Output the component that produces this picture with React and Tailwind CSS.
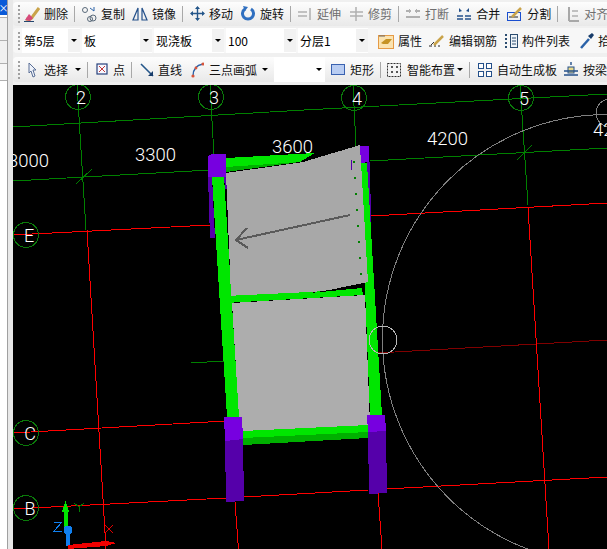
import React from 'react';

const cad = { fontFamily: 'Roboto, "Liberation Sans", sans-serif', fontWeight: 300 };

function Grip() {
  return (
    <div className="flex flex-col gap-[2px] w-[2px] mr-[5px] shrink-0">
      <span className="w-[2px] h-[2px] bg-[#a0a0a0]" />
      <span className="w-[2px] h-[2px] bg-[#a0a0a0]" />
      <span className="w-[2px] h-[2px] bg-[#a0a0a0]" />
      <span className="w-[2px] h-[2px] bg-[#a0a0a0]" />
      <span className="w-[2px] h-[2px] bg-[#a0a0a0]" />
    </div>
  );
}

function Sep() {
  return <span className="w-px h-[16px] bg-[#a8a8a8] shrink-0" />;
}

function Caret({ className = '' }) {
  return <span className={`w-0 h-0 border-x-[3px] border-x-transparent border-t-[3px] border-t-black shrink-0 ${className}`} />;
}

function Icon({ children, w = 16 }) {
  return (
    <svg width={w} height="16" viewBox={`0 0 ${w} 16`} className="shrink-0" fill="none">
      {children}
    </svg>
  );
}

function Tool({ icon, label, gray, caret, caretClass, className = '' }) {
  return (
    <div className={`flex items-center gap-[4px] shrink-0 whitespace-nowrap ${className}`}>
      {icon}
      <span className={gray ? 'text-[#6e6e6e]' : 'text-[#111]'}>{label}</span>
      {caret && <Caret className={caretClass} />}
    </div>
  );
}

function Select({ label, width }) {
  return (
    <div className={`${width} h-[25px] bg-white flex items-center pl-[2px] shrink-0`}>
      <span className="flex-1 whitespace-nowrap">{label}</span>
      <span className="w-[12px] h-[23px] bg-[#f2f2f2] flex items-center justify-center">
        <Caret />
      </span>
    </div>
  );
}

const eraser = (
  <Icon>
    <path d="M2 13c3 1 6 0 7-3l6-8" stroke="#c9a34a" strokeWidth="3" />
    <path d="M1 14l4-6 4 4-3 3z" fill="#d64a7a" />
    <path d="M0 15.500h10" stroke="#23466e" />
  </Icon>
);
const copyIcon = (
  <Icon>
    <circle cx="4" cy="4" r="2.5" stroke="#5a6a7a" />
    <circle cx="12" cy="12" r="3" stroke="#5a6a7a" />
    <circle cx="9" cy="13" r="2.5" stroke="#5a6a7a" />
    <path d="M9 2l4 3V1" stroke="#2a62a8" />
  </Icon>
);
const mirror = (
  <Icon>
    <path d="M6 2L1 14h5z" stroke="#24508a" strokeWidth="1.2" />
    <path d="M10 2l5 12h-5z" stroke="#24508a" strokeWidth="1.2" />
  </Icon>
);
const move = (
  <Icon w={15}>
    <path d="M7.500 1v13M1 7.500h13" stroke="#24568a" strokeWidth="1.4" />
    <path d="M5 3l2.500-3L10 3zM5 12l2.500 3 2.500-3zM3 5L0 7.500 3 10zM12 5l3 2.500L12 10z" fill="#24568a" />
  </Icon>
);
const rotate = (
  <Icon w={15}>
    <path d="M4 3a5.500 5.500 0 1 0 6 0" stroke="#2f6fc0" strokeWidth="3" />
    <path d="M2 0l5 1-3 4z" fill="#2f6fc0" />
  </Icon>
);
const extend = (
  <Icon>
    <path d="M1 6h9M1 10h9M13 2v12" stroke="#b0b0b0" strokeWidth="1.5" />
  </Icon>
);
const trim = (
  <Icon w={14}>
    <path d="M0 6h13M0 10h13M6 1v14" stroke="#b0b0b0" strokeWidth="1.5" />
  </Icon>
);
const breakIcon = (
  <Icon>
    <path d="M1 5h5M10 5h5M1 11h14" stroke="#b0b0b0" strokeWidth="2" />
    <path d="M4 3l2 2-2 2M12 3l-2 2 2 2" stroke="#b0b0b0" />
  </Icon>
);
const merge = (
  <Icon>
    <path d="M1 10h14M1 13h14" stroke="#24508a" strokeWidth="1.6" strokeDasharray="6 2" />
    <path d="M3 2l3 3-3 1zM13 2l-3 3 3 1z" fill="#24508a" />
  </Icon>
);
const split = (
  <Icon>
    <rect x="0.5" y="6.500" width="13" height="8" stroke="#1a4fd0" />
    <path d="M2 11h9" stroke="#222" />
    <path d="M5 11l9-9" stroke="#c9a34a" strokeWidth="2.5" />
  </Icon>
);
const align = (
  <Icon w={12}>
    <path d="M1 1v14M1 15h10" stroke="#a8a8a8" strokeWidth="2" />
    <path d="M4 5h6M4 10h6" stroke="#c0c0c0" strokeWidth="2" />
  </Icon>
);
const props = (
  <Icon>
    <rect x="0.5" y="2.500" width="15" height="13" fill="#fbe3b0" stroke="#e59a45" />
    <path d="M3 10l5-4h6l-4 5H5z" fill="#c69324" />
    <path d="M1 3h6" stroke="#666" />
  </Icon>
);
const rebar = (
  <Icon>
    <path d="M0 13h3M5 13h2M9 13h2" stroke="#222" />
    <path d="M5 12L14 3" stroke="#c9a34a" strokeWidth="2.5" />
    <path d="M2 12l3-3" stroke="#333" />
  </Icon>
);
const list = (
  <Icon w={14}>
    <path d="M1 2h2M1 6h2M1 10h2M1 14h2" stroke="#2b4c70" strokeWidth="2" strokeDasharray="2 1" />
    <rect x="6.500" y="1.500" width="7" height="13" fill="#eef3f8" stroke="#2b4c70" />
    <path d="M8 5h4M8 8h4M8 11h4" stroke="#2b4c70" />
  </Icon>
);
const picker = (
  <Icon w={14}>
    <path d="M1 15l8-9" stroke="#2a62a8" strokeWidth="2.5" />
    <path d="M8 3l3 3 3-4-2-2z" fill="#173c6a" />
  </Icon>
);
const cursor = (
  <Icon w={9}>
    <path d="M1 1l7 7H5l2 6-2 1-2-6-2 2z" fill="#eef2fa" stroke="#5a6f96" />
  </Icon>
);
const pointIcon = (
  <Icon w={12}>
    <rect x="1" y="2" width="10" height="10" fill="#f8f8ff" stroke="#28427c" strokeWidth="1.2" />
    <path d="M3 4l6 6M9 4l-6 6" stroke="#c23a3a" />
  </Icon>
);
const lineIcon = (
  <Icon w={14}>
    <path d="M1 2l12 12" stroke="#24568a" strokeWidth="1.6" />
    <path d="M13 9v5H8z" fill="#173c6a" />
  </Icon>
);
const arc = (
  <Icon w={13}>
    <path d="M2 14C2 7 6 3 12 2" stroke="#2a62a8" strokeWidth="1.4" />
    <circle cx="2" cy="14" r="1.6" fill="#d8543a" />
    <circle cx="12" cy="2" r="1.6" fill="#d8543a" />
    <circle cx="5" cy="6" r="1.4" fill="#d8543a" />
  </Icon>
);
const rectIcon = (
  <Icon w={14}>
    <rect x="0.5" y="2.500" width="13" height="10" fill="#b9cdf2" stroke="#3a62b0" />
  </Icon>
);
const smart = (
  <Icon w={14}>
    <rect x="0.5" y="1.500" width="13" height="13" fill="#f4f4f4" stroke="#333" strokeDasharray="2 1" />
    <path d="M4 5h2M5 4v2M9 5h2M10 4v2M4 10h2M5 9v2M9 10h2M10 9v2" stroke="#222" />
  </Icon>
);
const autoSlab = (
  <Icon w={14}>
    <rect x="0.5" y="1.500" width="5" height="5" fill="#fff" stroke="#24508a" />
    <rect x="8.500" y="1.500" width="5" height="5" fill="#fff" stroke="#24508a" />
    <rect x="0.5" y="9.500" width="5" height="5" fill="#fff" stroke="#24508a" />
    <rect x="8.500" y="9.500" width="5" height="5" fill="#fff" stroke="#24508a" />
  </Icon>
);
const byBeam = (
  <Icon w={14}>
    <rect x="4" y="5" width="6" height="6" fill="#e9d98a" stroke="#24508a" />
    <path d="M0 9h14M0 13h14M7 0v3" stroke="#24508a" strokeWidth="1.4" />
  </Icon>
);

// grid + building are one drawing, coordinates are page pixels
function Axis({ cx, cy, label, lx }) {
  return (
    <g>
      <circle cx={cx} cy={cy} r="12.5" fill="none" stroke="#0a7a0a" />
      <text x={lx ?? cx + 3} y={cy + 7} textAnchor="middle" fontSize="18" fill="#fff" style={cad}>{label}</text>
    </g>
  );
}

function Dim({ x, y, children }) {
  return <text x={x} y={y} fontSize="18.500" fill="#fff" style={cad}>{children}</text>;
}

function Drawing() {
  const green = '#008000';
  const red = '#ff0000';
  return (
    <svg width="594" height="464" viewBox="13 85 594 464" className="block" shapeRendering="crispEdges">
      {/* grid lines */}
      <g fill="none" strokeWidth="1">
        <path d="M77 85L86 230" stroke={green} />
        <path d="M210 85L214 156" stroke={green} />
        <path d="M353 85L356 146" stroke={green} />
        <path d="M520 85L528 205" stroke={green} />
        <path d="M13 127L304 110L607 94" stroke={green} />
        <path d="M13 181L210 170M370 161L607 148" stroke={green} />
        <path d="M76 184L92 169M517 160L532 145" stroke={green} />
        <path d="M191 363L224 361" stroke={green} />
        <path d="M13 235L210 225M371 216L607 203" stroke={red} />
        <path d="M377 353L607 340" stroke="#800000" />
        <path d="M13 433L226 421" stroke={red} />
        <path d="M13 509L226 498M244 497L368 490M386 489L607 477" stroke={red} />
        <path d="M528 207L549 549" stroke={red} />
        <path d="M378 493L382 549" stroke={red} />
        <path d="M235 502L238.500 549" stroke={red} />
        <path d="M87 230L106 549" stroke={red} />
      </g>

      <Axis cx={78} cy={97} label="2" lx={81} />
      <Axis cx={211} cy={97} label="3" lx={214} />
      <Axis cx={354} cy={98} label="4" lx={357} />
      <Axis cx={521} cy={98} label="5" lx={524} />
      <Axis cx={26} cy={235} label="E" lx={29} />
      <Axis cx={26} cy={433} label="C" lx={30} />
      <Axis cx={26} cy={508} label="B" lx={30} />

      <circle cx="607" cy="339" r="224.5" fill="none" stroke="#808080" />
      <circle cx="610" cy="113" r="14" fill="none" stroke="#808080" />

      <Dim x={8} y={167}>3000</Dim>
      <Dim x={135} y={161}>3300</Dim>
      <Dim x={272} y={153}>3600</Dim>
      <Dim x={427} y={145}>4200</Dim>
      <Dim x={593} y={136}>42</Dim>

      {/* columns behind the walls */}
      <polygon points="208,177 212,177 215,238 210,238" fill="#5500aa" />
      <polygon points="224,177 227,177 227,189 225,189" fill="#5500aa" />
      <polygon points="367,162 370,162 371,225 369,225" fill="#5500aa" />

      {/* walls */}
      <polygon points="360,163 367,163 382,415 370,415" fill="#00e600" />
      <polygon points="212,177 224,177 239,417 227,417 219,290" fill="#00e600" />
      <polygon points="226,158 315,153 300,162 226,167" fill="#00e600" />
      <polygon points="226,167 300,162 226,172" fill="#00b000" />

      {/* slab */}
      <polygon points="226,173 303,162 360,145 368,282 310,294 231,296" fill="#a8a8a8" />
      <polygon points="226,296 310,292 362,288 363,295 226,303" fill="#00e600" />
      <polygon points="310,293 362,285 362,288" fill="#000" />
      <polygon points="232,303 365,295 370,425 243,431 239,417" fill="#adadad" />
      <polygon points="243,431 368,425 368,432 243,438" fill="#00e600" />
      <polygon points="243,438 368,432 368,438 243,445" fill="#00b000" />

      {/* slab direction arrow */}
      <path d="M350 215L236 240M247 228L236 240L248 248" fill="none" stroke="#5a5a5a" strokeWidth="2" />
      <path d="M354 161v2M355 177v2M356 193v2M357 209v2M358 225v2M359 241v2M360 257v2M361 273v2" stroke="#008000" strokeWidth="1.5" />
      <path d="M351.500 160v10" stroke="#5500aa" />

      {/* columns */}
      <polygon points="208,156 212,154 226,154 226,177 208,177" fill="#7700e0" />
      <polygon points="360,146 369,146 369,162 361,163" fill="#7700e0" />
      <polygon points="225,441 243,439 244,501 226,502" fill="#5500aa" />
      <polygon points="224,417 242,417 243,439 225,441" fill="#7700e0" />
      <polygon points="368,432 386,431 387,493 369,494" fill="#5500aa" />
      <polygon points="367,415 385,415 386,431 368,432" fill="#7700e0" />

      {/* snap circle sits over the wall */}
      <circle cx="383" cy="340" r="14" fill="none" stroke="#b8b8b8" />

      {/* UCS marker */}
      <path d="M66 510V530" stroke="#00e600" strokeWidth="4" />
      <polygon points="65.500,501 69,512 62,512" fill="#00e600" />
      <path d="M68 530V546" stroke="#1080f0" strokeWidth="4" />
      <circle cx="68" cy="530" r="4.500" fill="#1080f0" />
      <polygon points="68,545 106,541 117,543 106,546 68,549" fill="#f00000" />
      <path d="M74 503L79 507L84 503M79 507V512" stroke="#008000" fill="none" />
      <path d="M54 522H62L54 531H62" stroke="#1080f0" fill="none" />
      <path d="M105 525L113 533M113 525L105 533" stroke="#e00000" fill="none" />
    </svg>
  );
}

export default function App() {
  return (
    <div className="w-[607px] h-[549px] flex overflow-hidden bg-[#f0f0f0] text-[12px] leading-none" style={{ fontFamily: '"Noto Sans CJK SC", "Liberation Sans", sans-serif' }}>
      {/* dock strip on the left */}
      <div className="w-[13px] h-full flex shrink-0">
        <div className="w-[8px] h-full flex flex-col border-r border-[#a0a0a0] bg-white">
          <div className="h-[15px] bg-[#0a5ad8] text-white text-[10px] flex items-center justify-center">×</div>
          <div className="h-[24px] mt-[2px] bg-[#f0f0f0] border-y border-[#b0b0b0]" />
          <div className="h-[23px] bg-[#f0f0f0] border-b border-[#b0b0b0]" />
          <div className="h-[17px] bg-[#f6f6f6] border-b border-[#b0b0b0]" />
          <div className="flex-1 bg-white" />
        </div>
        <div className="flex-1 bg-[#e8e8e8]" />
      </div>

      <div className="flex-1 flex flex-col min-w-0">
        <div className="h-[85px] flex flex-col overflow-hidden pt-[2px]">
          <div className="h-[24px] flex items-center pl-[5px] gap-[6px] rounded-l-sm bg-gradient-to-b from-[#fdfdfd] to-[#e9e9e9] whitespace-nowrap">
            <Grip />
            <Tool icon={eraser} label="删除" className="-ml-[7px]" />
            <Sep />
            <Tool icon={copyIcon} label="复制" />
            <Tool icon={mirror} label="镜像" className="ml-[1px]" />
            <Sep />
            <Tool icon={move} label="移动" className="ml-[1px]" />
            <Tool icon={rotate} label="旋转" className="ml-[2px]" />
            <Sep />
            <Tool icon={extend} label="延伸" gray />
            <Tool icon={trim} label="修剪" gray className="ml-[3px]" />
            <Sep />
            <Tool icon={breakIcon} label="打断" gray />
            <Tool icon={merge} label="合并" className="ml-[1px]" />
            <Tool icon={split} label="分割" className="ml-[1px]" />
            <Sep />
            <Tool icon={align} label="对齐" gray className="ml-[4px]" />
          </div>
          <div className="h-[25px] mt-[2px] flex items-center pl-[5px] gap-[2px] rounded-l-sm bg-[#f7f7f7] whitespace-nowrap">
            <Grip />
            <Select label="第5层" width="w-[58px] -ml-[5px]" />
            <Select label="板" width="w-[70px]" />
            <Select label="现浇板" width="w-[70px]" />
            <Select label="100" width="w-[70px]" />
            <Select label="分层1" width="w-[70px]" />
            <span className="ml-[2px] mr-[4px]"><Sep /></span>
            <Tool icon={props} label="属性" />
            <Tool icon={rebar} label="编辑钢筋" className="ml-[5px]" />
            <Tool icon={list} label="构件列表" className="ml-[5px]" />
            <Tool icon={picker} label="拾" className="ml-[8px]" />
          </div>
          <div className="h-[25px] mt-[4px] flex items-center pl-[5px] gap-[6px] rounded-l-sm bg-gradient-to-b from-[#fdfdfd] to-[#e9e9e9] whitespace-nowrap">
            <Grip />
            <Tool icon={cursor} label="选择" caret className="-ml-[3px] gap-[7px]" />
            <Sep />
            <Tool icon={pointIcon} label="点" className="ml-[2px] gap-[5px]" />
            <Sep />
            <Tool icon={lineIcon} label="直线" className="ml-[2px]" />
            <Tool icon={arc} label="三点画弧" caret className="ml-[3px] gap-[5px]" />
            <div className="w-[55px] h-[25px] bg-white flex items-center justify-end pr-[3px]">
              <Caret />
            </div>
            <Tool icon={rectIcon} label="矩形" className="gap-[5px]" />
            <Sep />
            <Tool icon={smart} label="智能布置" caret caretClass="-ml-[4px]" className="gap-[6px]" />
            <Sep />
            <Tool icon={autoSlab} label="自动生成板" className="ml-[2px] gap-[5px]" />
            <Tool icon={byBeam} label="按梁" className="ml-[1px] gap-[5px]" />
          </div>
        </div>
        <div className="flex-1 bg-black overflow-hidden">
          <Drawing />
        </div>
      </div>
    </div>
  );
}
